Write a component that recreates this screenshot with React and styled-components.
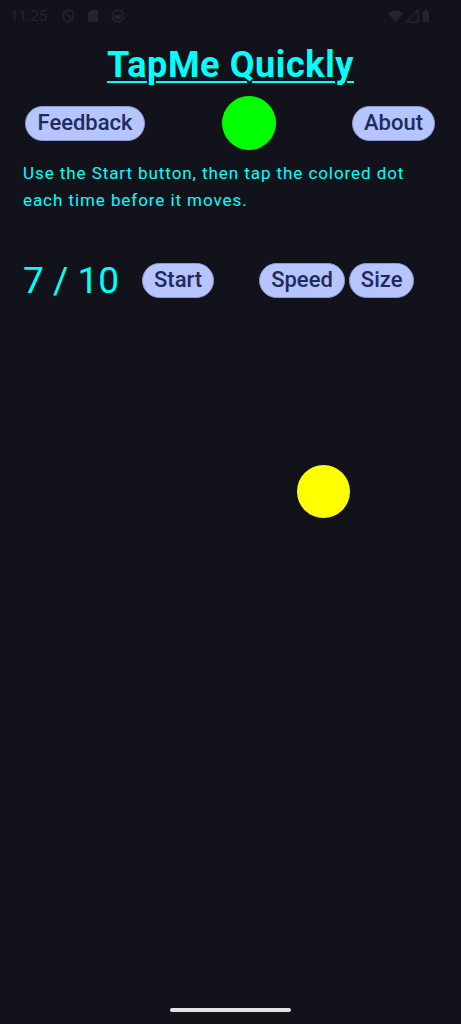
import React from 'react';
import styled, { createGlobalStyle } from 'styled-components';

const GlobalStyle = createGlobalStyle`
  html, body {
    margin: 0;
    padding: 0;
    background: #12131a;
  }
  * { box-sizing: border-box; }
`;

const Page = styled.div`
  width: 461px;
  height: 1024px;
  display: flex;
  flex-direction: column;
  background: #12131a;
  font-family: Roboto, "Noto Sans", sans-serif;
  overflow: hidden;
`;

// --- barra de status (bem apagada na captura) ---
const StatusBar = styled.div`
  height: 32px;
  display: flex;
  align-items: center;
  justify-content: space-between;
  padding: 0 30px 0 10px;
  color: #24252b;
`;

const StatusGroup = styled.div`
  display: flex;
  align-items: center;
  gap: ${({ gap }) => gap || 12}px;
`;

const Clock = styled.span`
  font-size: 15px;
  margin-right: 2px;
`;

const Title = styled.h1`
  margin: 10px 0 0;
  text-align: center;
  font-size: 36px;
  font-weight: 700;
  letter-spacing: 0.6px;
  line-height: 46px;
  color: #00ffff;
  text-decoration: underline;
  text-decoration-thickness: 2px;
  text-underline-offset: 4px;
`;

const TopRow = styled.div`
  margin-top: 8px;
  padding: 0 26px 0 25px;
  display: flex;
  align-items: center;
  justify-content: space-between;
  height: 54px;
`;

const Pill = styled.button`
  height: 35px;
  padding: 0 ${({ pad }) => pad || 11.5}px;
  border-radius: 18px;
  border: 1px solid #8e9bd0;
  background: #b6c4ff;
  color: #1e2b5b;
  font-family: Roboto, "Noto Sans", sans-serif;
  font-size: 22px;
  font-weight: 500;
  line-height: 1;
  cursor: pointer;
`;

const Dot = styled.div`
  width: ${({ size }) => size || 54}px;
  height: ${({ size }) => size || 54}px;
  border-radius: 50%;
  background: ${({ color }) => color};
`;

const Hint = styled.p`
  margin: 10px 0 0;
  padding: 0 23px;
  font-size: 17px;
  line-height: 27px;
  letter-spacing: 0.93px;
  color: #00ffff;
`;

const ScoreRow = styled.div`
  margin-top: 48px;
  padding-left: 23px;
  display: flex;
  align-items: center;
  height: 36px;
`;

const Score = styled.span`
  font-size: 37px;
  font-weight: 400;
  color: #00ffff;
  margin-right: 23px;
  white-space: pre;
`;

const Controls = styled.div`
  display: flex;
  gap: 4px;
  margin-left: 45px;
`;

const Canvas = styled.div`
  position: relative;
  flex: 1;
`;

const Target = styled(Dot)`
  position: absolute;
`;

const HomeBar = styled.div`
  height: 24px;
  display: flex;
  justify-content: center;
  align-items: flex-start;
  padding-top: 8px;

  span {
    width: 121px;
    height: 4px;
    border-radius: 2px;
    background: #e4e4e6;
  }
`;

const Icon = ({ children, w = 14 }) => (
  <svg width={w} height="14" viewBox={`0 0 ${w} 14`} fill="currentColor">
    {children}
  </svg>
);

export default function App() {
  const target = { x: 297, y: 167 };

  return (
    <>
      <GlobalStyle />
      <Page>
        <StatusBar>
          <StatusGroup>
            <Clock>11:25</Clock>
            <Icon>
              <path d="M7 1 L12 3 V7 C12 10 9.5 12.5 7 13 C4.5 12.5 2 10 2 7 V3 Z" fill="none" stroke="currentColor" strokeWidth="1.6" />
              <path d="M3 2 L12 12" stroke="currentColor" strokeWidth="1.6" />
            </Icon>
            <Icon w={12}>
              <path d="M4 1 H11 V13 H1 V4 Z" />
            </Icon>
            <Icon>
              <circle cx="7" cy="7" r="5.8" fill="none" stroke="currentColor" strokeWidth="1.6" />
              <path d="M3.5 6 H10.5 V8 C10.5 9.5 9 10.5 7 10.5 C5 10.5 3.5 9.5 3.5 8 Z" />
            </Icon>
          </StatusGroup>
          <StatusGroup gap={2}>
            <Icon w={15}>
              <path d="M0 4.5 C4 0.5 11 0.5 15 4.5 L7.5 13 Z" />
            </Icon>
            <Icon>
              <path d="M13 1 V13 H1 Z" fill="none" stroke="currentColor" strokeWidth="1.4" />
            </Icon>
            <Icon w={10}>
              <path d="M2 2 H4 V0.5 H6 V2 H8 V13 H2 Z" />
            </Icon>
          </StatusGroup>
        </StatusBar>

        <Title>TapMe Quickly</Title>

        <TopRow>
          <Pill>Feedback</Pill>
          <Dot color="#00ff00" />
          <Pill pad={11}>About</Pill>
        </TopRow>

        <Hint>
          Use the Start button, then tap the colored dot each time before it moves.
        </Hint>

        <ScoreRow>
          <Score>7 / 10</Score>
          <Pill pad={11}>Start</Pill>
          <Controls>
            <Pill pad={11}>Speed</Pill>
            <Pill pad={11}>Size</Pill>
          </Controls>
        </ScoreRow>

        <Canvas>
          <Target
            color="#ffff00"
            size={53}
            style={{ left: target.x, top: target.y }}
          />
        </Canvas>

        <HomeBar>
          <span />
        </HomeBar>
      </Page>
    </>
  );
}
